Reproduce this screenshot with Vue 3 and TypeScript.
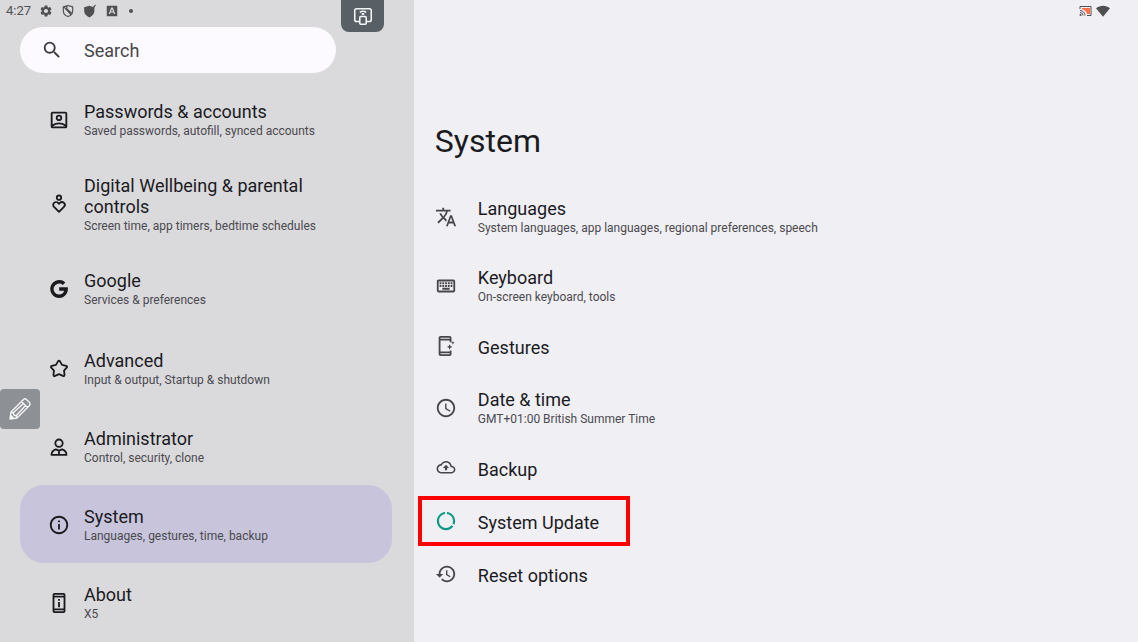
<script setup lang="ts">
import { ref } from 'vue'

interface Icon {
  fill?: string
  stroke?: string
  view?: string
}
interface Entry {
  id: string
  title: string
  summary?: string
  icon: Icon
}

const query = ref('')
const selected = ref('system')

const accountEntries: Entry[] = [
  {
    id: 'passwords',
    title: 'Passwords & accounts',
    summary: 'Saved passwords, autofill, synced accounts',
    icon: {
      stroke:
        'M5 4h14a1 1 0 0 1 1 1v14a1 1 0 0 1-1 1H5a1 1 0 0 1-1-1V5a1 1 0 0 1 1-1zM12 7.2a2.5 2.5 0 1 0 0 5 2.5 2.5 0 0 0 0-5zM4.500 18.200Q12 13.200 19.500 18.200',
    },
  },
  {
    id: 'wellbeing',
    title: 'Digital Wellbeing & parental controls',
    summary: 'Screen time, app timers, bedtime schedules',
    icon: {
      stroke:
        'M12 2.700a2.400 2.400 0 1 0 0 4.800 2.400 2.400 0 0 0 0-4.800zM12 20.500L6.600 15.200a3.100 3.100 0 0 1 4.400-4.400l1 1 1-1a3.100 3.100 0 0 1 4.400 4.400z',
    },
  },
  {
    id: 'google',
    title: 'Google',
    summary: 'Services & preferences',
    icon: {
      fill: 'M12.200 10.200h9.400c.2 1 .2 2 0 3.200-.8 5-4.500 8.400-9.400 8.400a9.800 9.800 0 1 1 6.700-17l-2.800 2.700a6 6 0 1 0-3.900 10.500c2.900 0 4.800-1.600 5.400-4h-5.400z',
    },
  },
]

const deviceEntries: Entry[] = [
  {
    id: 'advanced',
    title: 'Advanced',
    summary: 'Input & output, Startup & shutdown',
    icon: {
      stroke:
        'M10.900 3.700Q12 2.200 13.100 3.700L15.300 7.500 19.800 8.500Q21.500 9 20.400 10.500L17.500 13.700 18 18.300Q18 20.200 16.200 19.500L12 17.600 7.800 19.500Q6 20.200 6 18.300L6.500 13.700 3.600 10.500Q2.500 9 4.200 8.500L8.700 7.500z',
    },
  },
  {
    id: 'administrator',
    title: 'Administrator',
    summary: 'Control, security, clone',
    icon: {
      stroke:
        'M12 3.800a4 4 0 1 0 0 8 4 4 0 0 0 0-8zM8.500 14.500L12 16 15.500 14.500Q20 16 20.200 20.500H3.800Q4 16 8.500 14.500zM12 15.500V20',
    },
  },
  {
    id: 'system',
    title: 'System',
    summary: 'Languages, gestures, time, backup',
    icon: {
      fill: 'M11 7h2v2h-2zm0 4h2v6h-2zm1-9C6.480 2 2 6.480 2 12s4.480 10 10 10 10-4.480 10-10S17.520 2 12 2zm0 18a8 8 0 1 1 0-16 8 8 0 0 1 0 16z',
    },
  },
  {
    id: 'about',
    title: 'About',
    summary: 'X5',
    icon: {
      fill: 'M7 1h10a2 2 0 0 1 2 2v18a2 2 0 0 1-2 2H7a2 2 0 0 1-2-2V3a2 2 0 0 1 2-2zm0 2v1h10V3zm0 3v12h10V6zm0 14v1h10v-1zM11 7.500h2v2h-2zm0 3.500h2v5.500h-2z',
    },
  },
]

const systemRows: Entry[] = [
  {
    id: 'languages',
    title: 'Languages',
    summary: 'System languages, app languages, regional preferences, speech',
    icon: {
      fill: 'M12.870 15.070l-2.540-2.510.03-.03c1.740-1.940 2.980-4.170 3.710-6.530H17V4h-7V2H8v2H1v1.990h11.170C11.500 7.920 10.440 9.750 9 11.350 8.070 10.320 7.300 9.190 6.690 8h-2c.73 1.630 1.730 3.170 2.980 4.560l-5.090 5.020L4 19l5-5 3.110 3.110.76-2.040zM18.500 10h-2L12 22h2l1.120-3h4.750L21 22h2l-4.500-12zm-2.620 7l1.620-4.330L19.120 17h-3.240z',
    },
  },
  {
    id: 'keyboard',
    title: 'Keyboard',
    summary: 'On-screen keyboard, tools',
    icon: {
      fill: 'M20 7v10H4V7h16m0-2H4c-1.100 0-1.990.9-1.990 2L2 17c0 1.100.9 2 2 2h16c1.100 0 2-.9 2-2V7c0-1.100-.9-2-2-2zm-9 3h2v2h-2zm0 3h2v2h-2zM8 8h2v2H8zm0 3h2v2H8zm-3 0h2v2H5zm0-3h2v2H5zm3 6h8v2H8zm6-3h2v2h-2zm0-3h2v2h-2zm3 3h2v2h-2zm0-3h2v2h-2z',
    },
  },
  {
    id: 'gestures',
    title: 'Gestures',
    icon: {
      fill: 'M6 1h10a2 2 0 0 1 2 2v5h-2V6H6v12h10v-1h2v4a2 2 0 0 1-2 2H6a2 2 0 0 1-2-2V3a2 2 0 0 1 2-2zm0 2v1h10V3zm0 17v1h10v-1zM16 10l.9 2.100 2.100.9-2.100.9-.9 2.100-.9-2.100-2.100-.9 2.100-.9zM19.500 6.500l.6 1.400 1.400.6-1.400.6-.6 1.400-.6-1.400-1.400-.6 1.400-.6z',
    },
  },
  {
    id: 'datetime',
    title: 'Date & time',
    summary: 'GMT+01:00 British Summer Time',
    icon: {
      fill: 'M11.990 2C6.470 2 2 6.480 2 12s4.470 10 9.990 10C17.520 22 22 17.520 22 12S17.520 2 11.990 2zM12 20c-4.420 0-8-3.580-8-8s3.580-8 8-8 8 3.580 8 8-3.580 8-8 8zm.5-13H11v6l5.250 3.150.75-1.230-4.500-2.670z',
    },
  },
  {
    id: 'backup',
    title: 'Backup',
    icon: {
      view: '-2 -1 28 28',
      fill: 'M19.350 10.040C18.670 6.590 15.640 4 12 4 9.110 4 6.600 5.640 5.350 8.040 2.340 8.360 0 10.910 0 14c0 3.310 2.690 6 6 6h13c2.760 0 5-2.240 5-5 0-2.640-2.050-4.780-4.650-4.960zM19 18H6c-2.210 0-4-1.790-4-4 0-2.050 1.530-3.760 3.560-3.970l1.070-.11.5-.95C8.080 7.140 9.940 6 12 6c2.620 0 4.880 1.860 5.390 4.430l.3 1.500 1.530.11c1.560.1 2.780 1.410 2.780 2.960 0 1.650-1.350 3-3 3zM8 13h2.550v3h2.900v-3H16l-4-4z',
    },
  },
  {
    id: 'update',
    title: 'System Update',
    icon: {
      fill: 'M13 2.050v2.430c3.900.5 6.600 3.600 6.600 7.520 0 1-.2 1.950-.55 2.840l2.100 1.230c.56-1.240.85-2.620.85-4.070 0-5.180-3.950-9.450-9-9.950zM12 19.600c-4.200 0-7.600-3.400-7.600-7.600 0-3.900 2.800-7 6.600-7.520V2.050c-5.060.5-9 4.760-9 9.950 0 5.520 4.470 10 9.990 10 3.310 0 6.240-1.610 8.060-4.090l-2.100-1.230C16.600 18.480 14.500 19.600 12 19.600z',
    },
  },
  {
    id: 'reset',
    title: 'Reset options',
    icon: {
      fill: 'M13 3c-4.970 0-9 4.030-9 9H1l3.890 3.890.07.14L9 12H6c0-3.870 3.130-7 7-7s7 3.130 7 7-3.130 7-7 7c-1.930 0-3.680-.79-4.940-2.060l-1.420 1.420C8.270 19.990 10.510 21 13 21c4.970 0 9-4.030 9-9s-4.030-9-9-9zm-1 5v5l4.280 2.540.72-1.210-3.500-2.080V8H12z',
    },
  },
]

const groups = [
  { id: 'accounts', entries: accountEntries },
  { id: 'device', entries: deviceEntries },
]
</script>

<template>
  <div class="screen">
    <aside class="sidebar">
      <div class="status">
        <span class="clock">4:27</span>
        <svg viewBox="0 0 24 24" aria-hidden="true">
          <path
            fill="currentColor"
            fill-rule="evenodd"
            d="M19.140 12.940c.04-.3.06-.61.06-.94s-.02-.64-.07-.94l2.030-1.580c.18-.14.23-.41.12-.61l-1.920-3.320c-.12-.22-.37-.29-.59-.22l-2.390.96c-.5-.38-1.030-.7-1.620-.94l-.36-2.540c-.04-.24-.24-.41-.48-.41h-3.840c-.24 0-.43.17-.47.41l-.36 2.540c-.59.24-1.130.57-1.620.94l-2.390-.96c-.22-.08-.47 0-.59.22L2.740 8.870c-.12.21-.08.47.12.61l2.030 1.580c-.05.3-.09.63-.09.94s.02.64.07.94l-2.030 1.580c-.18.14-.23.41-.12.61l1.920 3.320c.12.22.37.29.59.22l2.390-.96c.5.38 1.030.7 1.620.94l.36 2.540c.05.24.24.41.48.41h3.840c.24 0 .44-.17.47-.41l.36-2.540c.59-.24 1.130-.56 1.620-.94l2.390.96c.22.08.47 0 .59-.22l1.920-3.320c.12-.22.07-.47-.12-.61zM12 15.600a3.600 3.600 0 1 1 0-7.200 3.600 3.600 0 0 1 0 7.200z"
          />
        </svg>
        <svg viewBox="0 0 24 24" aria-hidden="true">
          <path
            fill="none"
            stroke="currentColor"
            stroke-width="2"
            stroke-linejoin="round"
            d="M12 2.500L20 5v7c0 4.500-3.500 8-8 9.500C7.500 20 4 16.500 4 12V5zM5 5l12 13M10 3.500v5l8 7"
          />
        </svg>
        <svg viewBox="0 0 24 24" aria-hidden="true">
          <path
            fill="currentColor"
            d="M11 3l6 2 4-4 1 1-2.500 4.500V12c0 5-3.500 8.500-8.500 11-5-2.500-9-6-9-11V5.500z"
          />
        </svg>
        <svg viewBox="0 0 24 24" aria-hidden="true">
          <path
            fill="currentColor"
            fill-rule="evenodd"
            d="M4 3h16a1 1 0 0 1 1 1v16a1 1 0 0 1-1 1H4a1 1 0 0 1-1-1V4a1 1 0 0 1 1-1zM10.500 6L6.500 17h2.300l.8-2.500h4.800l.8 2.500h2.300l-4-11zm1.500 2.300l1.600 4.400h-3.200z"
          />
        </svg>
        <span class="more"></span>
      </div>

      <label class="search">
        <svg viewBox="0 0 24 24" aria-hidden="true">
          <path
            fill="currentColor"
            d="M15.500 14h-.79l-.28-.27A6.470 6.470 0 0 0 16 9.500 6.500 6.500 0 1 0 9.500 16c1.610 0 3.090-.59 4.230-1.570l.27.28v.79l5 4.990L20.490 19l-4.990-5zm-6 0a4.500 4.500 0 1 1 0-9 4.500 4.500 0 0 1 0 9z"
          />
        </svg>
        <input v-model="query" type="text" placeholder="Search" aria-label="Search" />
      </label>

      <nav class="menu">
        <div v-for="group in groups" :key="group.id" class="group" :class="group.id">
          <button
            v-for="entry in group.entries"
            :key="entry.id"
            type="button"
            class="entry"
            :class="{ selected: selected === entry.id }"
            @click="selected = entry.id"
          >
            <svg class="icon" viewBox="0 0 24 24" aria-hidden="true">
              <path v-if="entry.icon.fill" class="solid" :d="entry.icon.fill" />
              <path v-if="entry.icon.stroke" class="line" :d="entry.icon.stroke" />
            </svg>
            <span class="text">
              <span class="title">{{ entry.title }}</span>
              <span class="summary">{{ entry.summary }}</span>
            </span>
          </button>
        </div>
      </nav>
    </aside>

    <main class="detail">
      <div class="status right">
        <svg class="cast" viewBox="0 0 26 22" aria-hidden="true">
          <path fill="#ff7043" d="M6 5h16v12h-6C15 12 11 8 6 8z" />
          <path
            fill="none"
            stroke="currentColor"
            stroke-width="2"
            d="M2 7V2h22v18h-8M2 10a10 10 0 0 1 10 10M2 14a6 6 0 0 1 6 6"
          />
          <circle cx="3" cy="19" r="2" fill="currentColor" />
        </svg>
        <svg class="wifi" viewBox="0 0 26 22" aria-hidden="true">
          <path fill="currentColor" d="M13 21.500L0 6C7-.5 19-.5 26 6z" />
        </svg>
      </div>

      <h1>System</h1>

      <div class="rows">
        <button
          v-for="row in systemRows"
          :key="row.id"
          type="button"
          class="row"
          :class="[row.id, { single: !row.summary }]"
        >
          <svg class="icon" :viewBox="row.icon.view ?? '0 0 24 24'" aria-hidden="true">
            <path class="solid" :d="row.icon.fill" />
          </svg>
          <span class="text">
            <span class="title">{{ row.title }}</span>
            <span v-if="row.summary" class="summary">{{ row.summary }}</span>
          </span>
        </button>
      </div>
    </main>

    <button type="button" class="tool share" aria-label="Share screen">
      <svg viewBox="0 0 24 24" aria-hidden="true">
        <path
          fill="none"
          stroke="currentColor"
          stroke-width="1.700"
          stroke-linejoin="round"
          d="M8.500 18H5a2 2 0 0 1-2-2V6a2 2 0 0 1 2-2h14a2 2 0 0 1 2 2v10a2 2 0 0 1-2 2h-3.500M9.500 12.500h5a1 1 0 0 1 1 1V20a1 1 0 0 1-1 1h-5a1 1 0 0 1-1-1v-6.500a1 1 0 0 1 1-1zM8.500 8q3.500-2.500 7 0M10.500 10.200q1.500-1 3 0"
        />
      </svg>
    </button>
    <button type="button" class="tool pen" aria-label="Annotate">
      <svg viewBox="0 0 24 24" aria-hidden="true">
        <path
          fill="none"
          stroke="currentColor"
          stroke-width="1.400"
          stroke-linejoin="round"
          stroke-linecap="round"
          d="M2 22l1-7L15.500 2.500q1.500-1.300 3 0l3 3q1.300 1.500 0 3L9 21zM3 15l2.200.8.8 2.200 2.200.8L9 21M13.500 4.500l6 6M5.200 15.800L15.500 6.500M8.200 18.800L17.500 8.500M2 22l1.500-3 1.500 1.500z"
        />
      </svg>
    </button>
  </div>
</template>

<style>
body {
  margin: 0;
}
</style>

<style scoped>
.screen {
  position: relative;
  display: grid;
  grid-template-columns: 4fr 7fr;
  min-height: 100vh;
  background: #f0eff4;
  color: #1b1b1f;
  font-family: Roboto, "Noto Sans", sans-serif;
}
* {
  box-sizing: border-box;
}
button {
  margin: 0;
  border: 0;
  background: none;
  color: inherit;
  font: inherit;
  text-align: left;
  cursor: pointer;
}
.sidebar {
  background: #dad9dc;
}
.status {
  display: flex;
  align-items: center;
  gap: 8px;
  height: 22px;
  padding-left: 6px;
  color: #505053;
}
.status svg {
  width: 14px;
  height: 14px;
}
.clock {
  font-size: 13px;
  line-height: 22px;
}
.more {
  width: 4px;
  height: 4px;
  margin-left: 2px;
  border-radius: 50%;
  background: currentColor;
}
.search {
  display: flex;
  align-items: center;
  gap: 21px;
  height: 46px;
  margin: 5px 78px 0 20px;
  padding: 0 21px;
  border-radius: 23px;
  background: #fcfafe;
  color: #3b3b3f;
}
.search svg {
  flex: none;
  width: 22px;
  height: 22px;
}
.search input {
  flex: 1;
  min-width: 0;
  padding: 0;
  border: 0;
  outline: 0;
  background: none;
  color: inherit;
  font: inherit;
  font-size: 18px;
}
.search input::placeholder {
  color: #47464a;
  opacity: 1;
}
.menu {
  display: flex;
  flex-direction: column;
  gap: 3px;
  padding: 10px 22px 0 20px;
}
.group {
  display: flex;
  flex-direction: column;
}
.entry {
  display: flex;
  align-items: center;
  gap: 14px;
  padding: 15px 40px 16px 28px;
  border-radius: 24px;
}
.device .entry {
  padding-top: 18px;
  padding-bottom: 17px;
}
.entry.selected {
  background: #c7c4dc;
}
.icon {
  flex: none;
  width: 22px;
  height: 22px;
}
.solid {
  fill: currentColor;
  fill-rule: evenodd;
}
.line {
  fill: none;
  stroke: currentColor;
  stroke-width: 2;
  stroke-linejoin: round;
}
.text {
  display: flex;
  flex-direction: column;
  padding-top: 3px;
}
.title {
  font-size: 18px;
  line-height: 21px;
}
.summary {
  color: #4b4a4f;
  font-size: 12px;
  line-height: 19px;
}
.right {
  justify-content: flex-end;
  gap: 4px;
  padding: 0 28px 0 0;
}
.right .cast,
.right .wifi {
  height: 12px;
}
.right .cast {
  width: 13px;
}
h1 {
  margin: 98px 21px 0;
  font-size: 32px;
  font-weight: 400;
  line-height: 42px;
}
.rows {
  display: flex;
  flex-direction: column;
  margin-top: 21px;
}
.row {
  position: relative;
  display: flex;
  align-items: center;
  gap: 21px;
  padding: 12px 21px 14px;
}
.row.single {
  padding-top: 13px;
  padding-bottom: 16px;
}
.row .icon {
  color: #47464a;
}
.row.update .icon {
  color: #0b9a83;
}
.row.update::after {
  content: "";
  position: absolute;
  top: 0;
  left: 4px;
  box-sizing: border-box;
  width: 212px;
  height: 50px;
  border: 4px solid #fd0000;
}
.tool {
  position: absolute;
  display: flex;
  align-items: center;
  justify-content: center;
  padding: 0;
  color: #f4f5f6;
}
.share {
  top: 0;
  left: 30%;
  width: 43px;
  height: 32px;
  border-radius: 0 0 8px 8px;
  background: #596065;
}
.share svg {
  width: 22px;
  height: 22px;
}
.pen {
  top: 389px;
  left: 0;
  width: 40px;
  height: 40px;
  border-radius: 4px;
  background: #8d9195;
}
.pen svg {
  width: 24px;
  height: 24px;
}
</style>
